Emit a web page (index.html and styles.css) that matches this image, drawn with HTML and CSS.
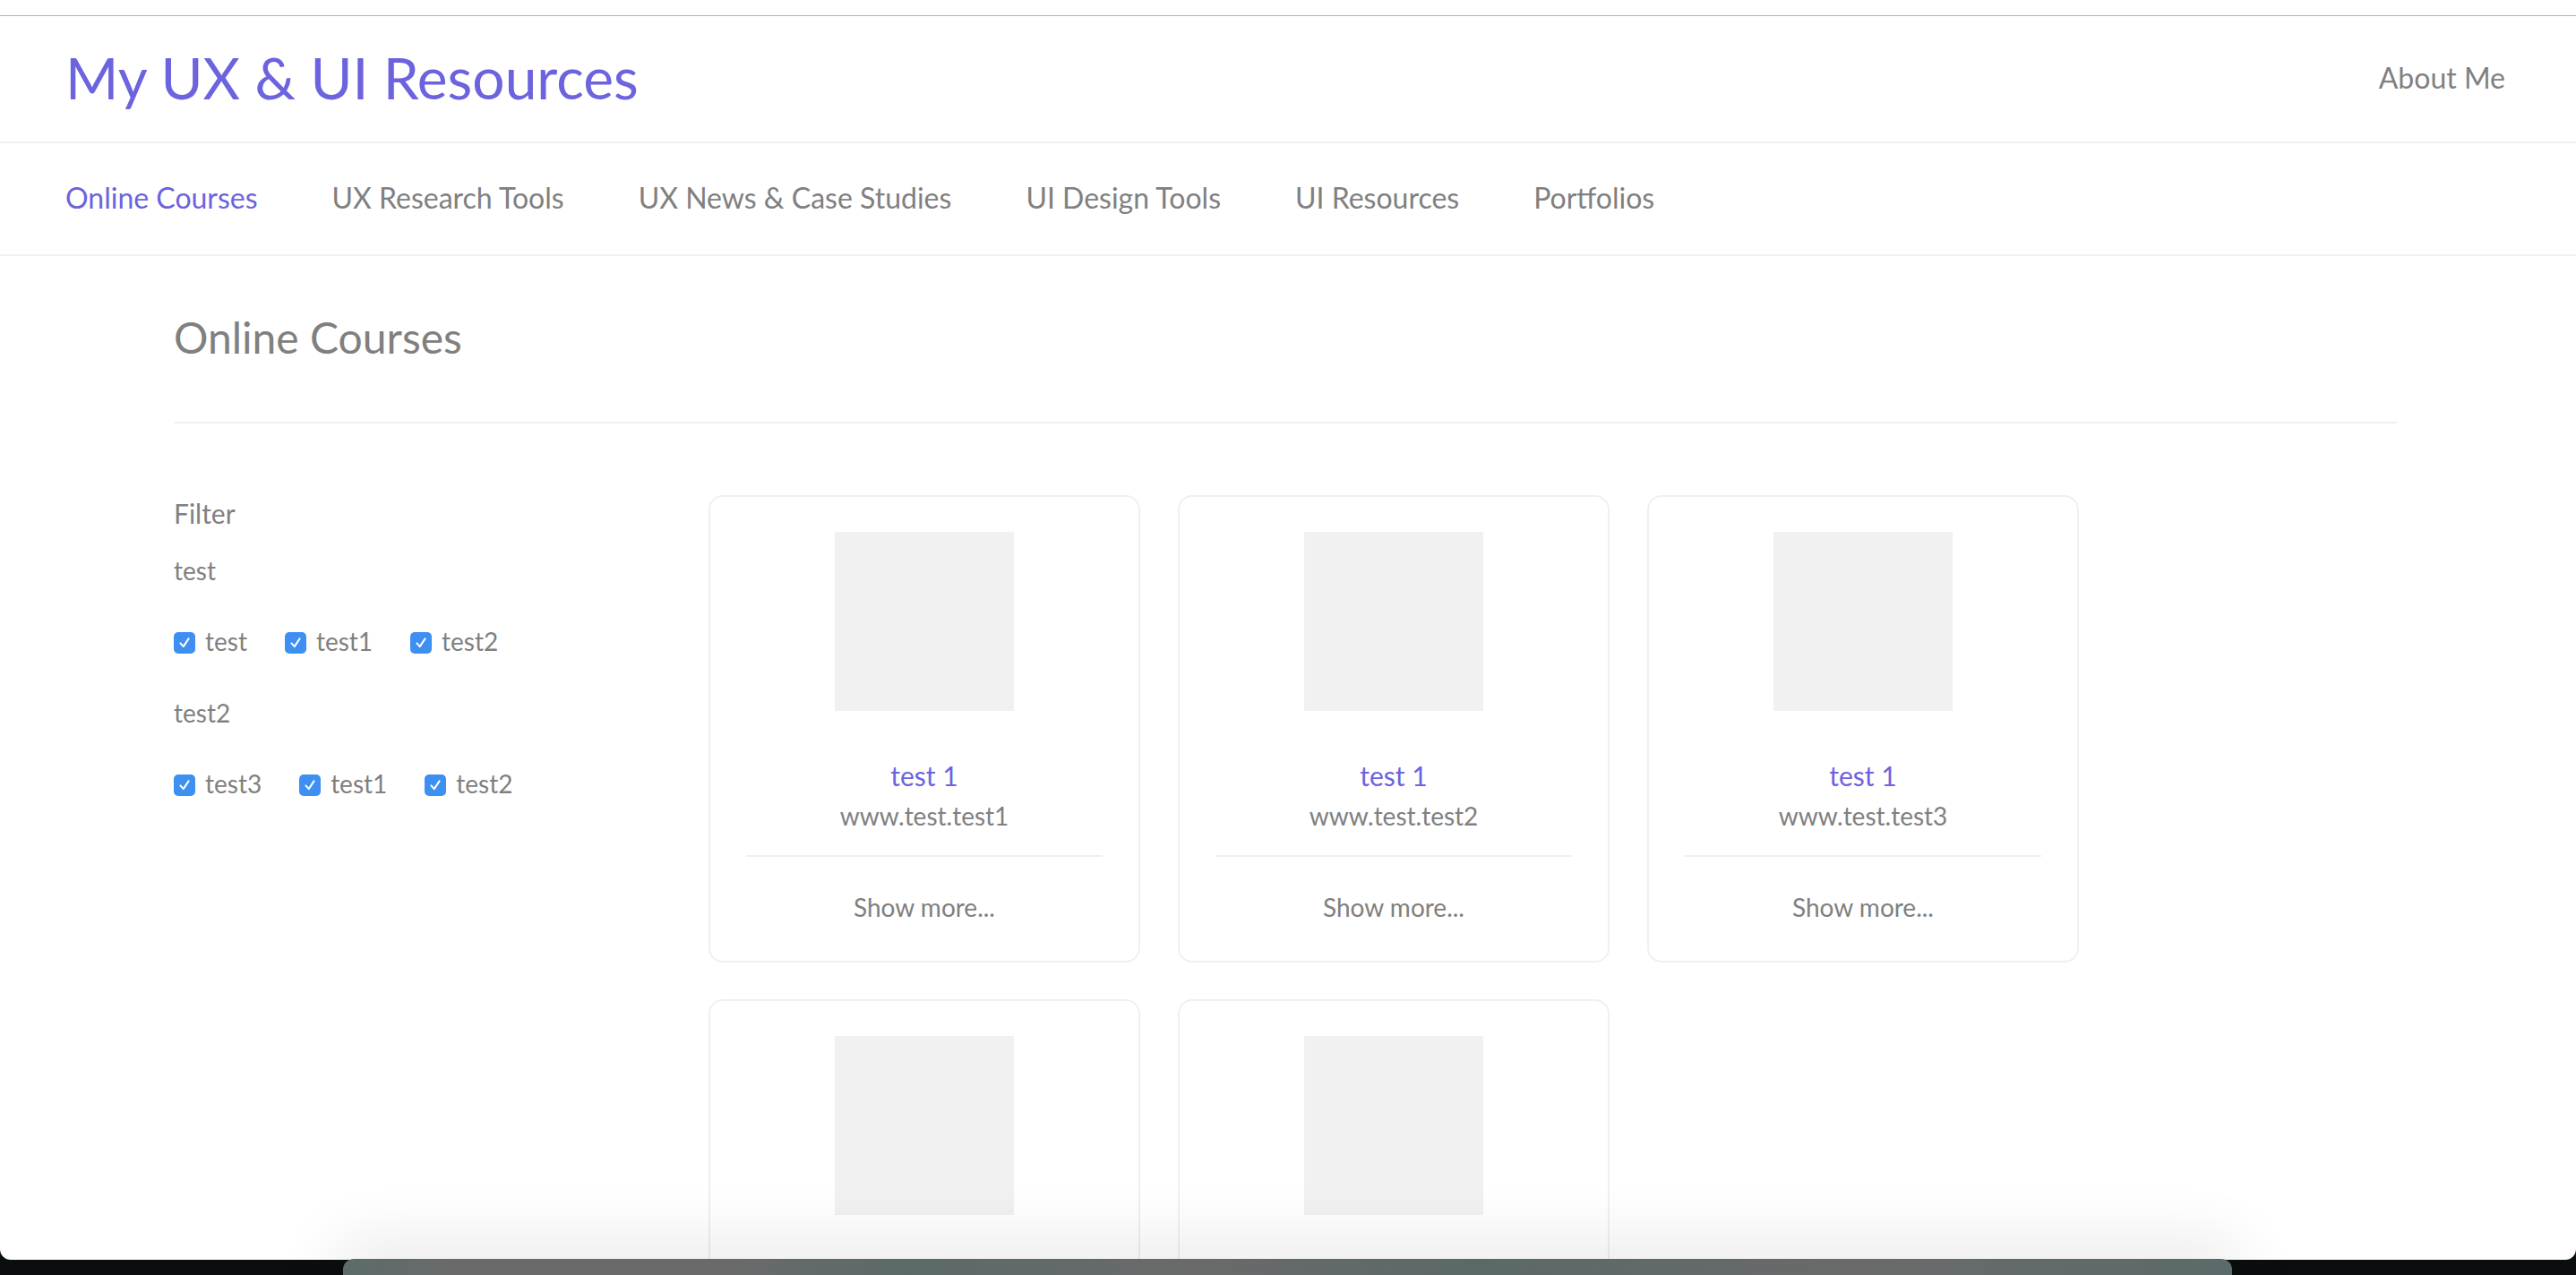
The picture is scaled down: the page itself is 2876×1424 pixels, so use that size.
FILE: index.html
```html
<!DOCTYPE html>
<html lang="en">
<head>
<meta charset="utf-8">
<title>My UX &amp; UI Resources</title>
<link rel="stylesheet" href="styles.css">
</head>
<body>
<div class="window">
  <div class="chrome-edge"></div>
  <header class="topbar">
    <a class="brand" href="#">My UX &amp; UI Resources</a>
    <a class="about" href="#">About Me</a>
  </header>
  <nav class="tabs">
    <a class="tab active" href="#">Online Courses</a>
    <a class="tab" href="#">UX Research Tools</a>
    <a class="tab" href="#">UX News &amp; Case Studies</a>
    <a class="tab" href="#">UI Design Tools</a>
    <a class="tab" href="#">UI Resources</a>
    <a class="tab" href="#">Portfolios</a>
  </nav>
  <main class="content">
    <h1 class="page-title">Online Courses</h1>
    <hr class="rule">
    <div class="layout">
      <aside class="filter">
        <div class="filter-title">Filter</div>
        <div class="group-label">test</div>
        <div class="options">
          <label class="option"><span class="box"><svg viewBox="0 0 24 24"><path d="M6.5 12.5 L10.5 17 L17.5 6.5"/></svg></span>test</label>
          <label class="option"><span class="box"><svg viewBox="0 0 24 24"><path d="M6.5 12.5 L10.5 17 L17.5 6.5"/></svg></span>test1</label>
          <label class="option"><span class="box"><svg viewBox="0 0 24 24"><path d="M6.5 12.5 L10.5 17 L17.5 6.5"/></svg></span>test2</label>
        </div>
        <div class="group-label">test2</div>
        <div class="options">
          <label class="option"><span class="box"><svg viewBox="0 0 24 24"><path d="M6.5 12.5 L10.5 17 L17.5 6.5"/></svg></span>test3</label>
          <label class="option"><span class="box"><svg viewBox="0 0 24 24"><path d="M6.5 12.5 L10.5 17 L17.5 6.5"/></svg></span>test1</label>
          <label class="option"><span class="box"><svg viewBox="0 0 24 24"><path d="M6.5 12.5 L10.5 17 L17.5 6.5"/></svg></span>test2</label>
        </div>
      </aside>
      <section class="cards">
        <article class="card">
          <div class="thumb"></div>
          <div class="card-title">test 1</div>
          <div class="card-url">www.test.test1</div>
          <div class="card-more">Show more...</div>
        </article>
        <article class="card">
          <div class="thumb"></div>
          <div class="card-title">test 1</div>
          <div class="card-url">www.test.test2</div>
          <div class="card-more">Show more...</div>
        </article>
        <article class="card">
          <div class="thumb"></div>
          <div class="card-title">test 1</div>
          <div class="card-url">www.test.test3</div>
          <div class="card-more">Show more...</div>
        </article>
        <article class="card">
          <div class="thumb"></div>
        </article>
        <article class="card">
          <div class="thumb"></div>
        </article>
      </section>
    </div>
  </main>
</div>
<div class="dock"></div>
</body>
</html>
```

FILE: styles.css
```css
html, body {
  margin: 0;
  padding: 0;
}

body {
  background: #0b0e0e;
  height: 1424px;
  overflow: hidden;
  position: relative;
  font-family: Lato, "Noto Sans", sans-serif;
  color: #808080;
}

a {
  text-decoration: none;
  color: inherit;
}

.window {
  background: #ffffff;
  height: 1407px;
  overflow: hidden;
  border-radius: 0 0 12px 12px;
}

.chrome-edge {
  height: 17px;
  border-bottom: 1px solid #b3b3b3;
}

.topbar {
  height: 138px;
  padding: 0 79px 2px 73px;
  border-bottom: 2px solid #f1f1f1;
  display: flex;
  align-items: center;
  justify-content: space-between;
}

.brand {
  font-size: 64px;
  color: #6c63de;
  line-height: 1;
}

.about {
  font-size: 32px;
  color: #808080;
  line-height: 1;
}

.tabs {
  height: 122px;
  padding: 0 73px 2px;
  border-bottom: 2px solid #f1f1f1;
  display: flex;
  align-items: center;
  gap: 83px;
}

.tab {
  font-size: 32px;
  line-height: 1;
  color: #808080;
}

.tab.active {
  color: #6c63de;
}

.content {
  padding: 0 200px 0 194px;
}

.page-title {
  margin: 62px 0 0;
  font-size: 48px;
  font-weight: 400;
  line-height: 58px;
  color: #808080;
}

.rule {
  margin: 65px 0 0;
  border: 0;
  height: 2px;
  background: #f1f1f1;
}

.layout {
  display: flex;
  margin-top: 80px;
}

.filter {
  width: 597px;
  flex: none;
}

.filter-title {
  font-size: 30px;
  line-height: 36px;
  margin-top: 2px;
}

.group-label {
  font-size: 28px;
  line-height: 34px;
  margin-top: 29px;
}

.options {
  display: flex;
  gap: 42px;
  margin-top: 45px;
}

.options + .group-label {
  margin-top: 46px;
}

.option {
  display: flex;
  align-items: center;
  gap: 11px;
  font-size: 28px;
  line-height: 34px;
}

.box {
  width: 24px;
  height: 24px;
  border-radius: 5px;
  background: #3d8ff2;
  display: flex;
  align-items: center;
  justify-content: center;
  margin-top: 4px;
}

.box svg {
  width: 20px;
  height: 20px;
  fill: none;
  stroke: #ffffff;
  stroke-width: 2.4;
  stroke-linecap: round;
  stroke-linejoin: round;
}

.cards {
  display: flex;
  flex-wrap: wrap;
  gap: 41px 42px;
  align-content: flex-start;
}

.card {
  width: 482px;
  height: 522px;
  box-sizing: border-box;
  border: 2px solid #f0f0f0;
  border-radius: 16px;
  display: flex;
  flex-direction: column;
  align-items: center;
  padding: 39px 40px 0;
}

.thumb {
  width: 200px;
  height: 200px;
  background: #f1f1f1;
  flex: none;
}

.card-title {
  margin-top: 54px;
  font-size: 30px;
  line-height: 36px;
  color: #6c63de;
}

.card-url {
  margin-top: 10px;
  font-size: 28px;
  line-height: 34px;
  padding-bottom: 27px;
  border-bottom: 2px solid #f0f0f0;
  align-self: stretch;
  text-align: center;
}

.card-more {
  margin-top: 39px;
  font-size: 28px;
  line-height: 34px;
}

.dock {
  position: absolute;
  left: 383px;
  top: 1406px;
  width: 2109px;
  height: 40px;
  border-radius: 12px 12px 0 0;
  background: linear-gradient(90deg, #5d6b6b 0%, #6a6a6a 6%, #6a6a6a 20%, #5b6a69 30%, #6a6a6a 45%, #5a6968 60%, #6a6a6a 80%, #5b6a6a 100%);
  box-shadow: 0 -10px 70px 10px rgba(0, 0, 0, 0.09);
}
```
